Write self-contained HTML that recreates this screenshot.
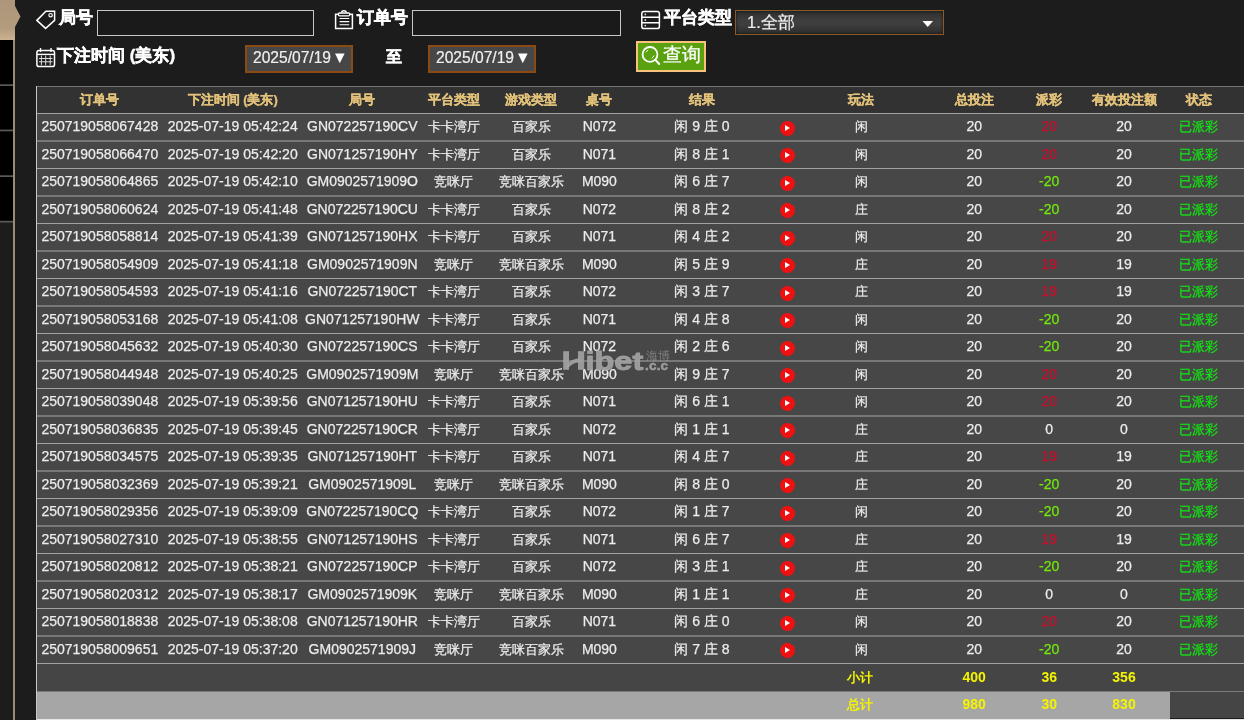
<!DOCTYPE html>
<html><head><meta charset="utf-8"><style>
html,body{margin:0;padding:0;}
body{will-change:transform;width:1244px;height:720px;overflow:hidden;position:relative;background:#1c1c1c;font-family:"Liberation Sans",sans-serif;color:#fff;}
.abs{position:absolute;}
.c{position:absolute;width:200px;text-align:center;white-space:nowrap;font-size:14px;color:#ececec;-webkit-text-stroke:0.25px currentColor;}
.c.h{color:#e2c27a;font-weight:bold;font-size:13px;}
.c.cj{font-size:13px;}
.c.red{color:#c8102e;}
.c.grn{color:#72e80a;}
.c.st{color:#14e414;font-size:13px;}
.c.tot{color:#f4f400;font-weight:bold;font-size:14px;-webkit-text-stroke:0;}
.rowbg{position:absolute;left:36px;width:1208px;background:#474747;}
.sep{position:absolute;left:36px;width:1208px;height:1px;background:#a2a2a2;}
.sep2{position:absolute;left:36px;width:1208px;height:2px;background:#787878;}
.play{position:absolute;width:15.2px;height:15.2px;border-radius:50%;background:#ee1111;}
.play:after{content:"";position:absolute;left:5.4px;top:4.4px;border-left:5.2px solid #fff;border-top:3.2px solid transparent;border-bottom:3.2px solid transparent;}
.lbl{position:absolute;font-weight:bold;font-size:17px;color:#fff;white-space:nowrap;-webkit-text-stroke:0.45px #fff;}
.inp{position:absolute;box-sizing:border-box;border:1.5px solid #c8c8c8;background:#1a1a1a;}
.date{position:absolute;box-sizing:border-box;border:2px solid #8a4a14;background:#474747;color:#eee;font-size:15px;white-space:nowrap;}
</style></head><body>
<!-- left strip -->
<svg class="abs" style="left:0;top:0" width="22" height="720" viewBox="0 0 22 720">
<defs><linearGradient id="tan" x1="0" y1="0" x2="0" y2="1"><stop offset="0" stop-color="#ad967a"/><stop offset="0.7" stop-color="#b39b7d"/><stop offset="1" stop-color="#cbb292"/></linearGradient></defs>
<path d="M0 0 H15 V6 L20.5 16.5 L15 27 V40 H0 Z" fill="url(#tan)"/>
<rect x="0" y="40" width="13" height="182" fill="#000"/>
<rect x="0" y="84.3" width="13" height="1.7" fill="#5d5a55"/>
<rect x="0" y="129.6" width="13" height="1.7" fill="#5d5a55"/>
<rect x="0" y="175.3" width="13" height="1.7" fill="#5d5a55"/>
<rect x="0" y="220.8" width="13" height="1.7" fill="#5d5a55"/>
<rect x="13" y="40" width="2" height="680" fill="#9b8a74"/>
</svg>

<!-- top controls -->
<svg class="abs" style="left:0;top:0" width="1244" height="80">
 <!-- tag -->
 <path d="M36.9 20.4 L45.9 11.3 H54.6 V20.3 L45.6 28.4 Z" fill="none" stroke="#fff" stroke-width="1.5" stroke-linejoin="miter"/>
 <circle cx="50.6" cy="15.2" r="1.7" fill="none" stroke="#fff" stroke-width="1.2"/>
 <!-- clipboard -->
 <rect x="335.6" y="14.3" width="16.8" height="14.2" fill="none" stroke="#fff" stroke-width="1.5"/>
 <rect x="338.4" y="13" width="11.4" height="2.8" rx="1.2" fill="#1c1c1c" stroke="#fff" stroke-width="1.3"/>
 <path d="M341.2 12.6 A2.8 2.6 0 0 1 346.6 12.6" fill="none" stroke="#fff" stroke-width="1.4"/>
 <path d="M339.6 18.5 H349.2 M339.6 21.6 H349.2 M339.6 24.7 H349.2" stroke="#fff" stroke-width="1.1"/>
 <!-- server -->
 <rect x="641.8" y="11.4" width="17.6" height="17.2" rx="2.2" fill="none" stroke="#fff" stroke-width="1.5"/>
 <path d="M641.8 17.3 H659.4 M641.8 22.8 H659.4" stroke="#fff" stroke-width="1.4"/>
 <circle cx="645.3" cy="14.4" r="0.9" fill="#ddd"/><circle cx="645.3" cy="20" r="0.9" fill="#ddd"/><circle cx="645.3" cy="25.6" r="0.9" fill="#ddd"/>
 <!-- calendar -->
 <rect x="36.9" y="50.4" width="17.6" height="16.2" rx="2.2" fill="none" stroke="#fff" stroke-width="1.5"/>
 <path d="M36.9 54.4 H54.5" stroke="#fff" stroke-width="1.4"/>
 <path d="M40.5 48 V52 M51 48 V52" stroke="#fff" stroke-width="1.4"/>
 <path d="M39 58.5 H52.5 M39 61.8 H52.5 M41.4 55.6 V65.2 M45.7 55.6 V65.2 M50.2 55.6 V65.2" stroke="#ddd" stroke-width="1"/>
</svg>
<div class="lbl" style="left:59px;top:6px">局号</div>
<div class="inp" style="left:97px;top:10px;width:217px;height:26px"></div>
<div class="lbl" style="left:357px;top:6px">订单号</div>
<div class="inp" style="left:412px;top:10px;width:209px;height:26px"></div>
<div class="lbl" style="left:664px;top:6px">平台类型</div>
<div class="abs" style="left:735px;top:10px;width:209px;height:25px;box-sizing:border-box;border:1.5px solid #8a5a28;background:linear-gradient(#2c2c2c,#3e3e3e 40%,#3e3e3e 60%,#2c2c2c);box-shadow:inset 0 0 3px #111;"></div>
<div class="abs" style="left:747px;top:11px;font-size:16.5px;color:#eee;line-height:22px;-webkit-text-stroke:0.2px #eee">1.全部</div>
<svg class="abs" style="left:922px;top:20px" width="12" height="8"><path d="M0.5 1 H11 L5.75 7 Z" fill="#fff"/></svg>

<div class="lbl" style="left:57px;top:44px">下注时间 (美东)</div>
<div class="date" style="left:245px;top:45px;width:108px;height:28px"></div>
<div class="abs" style="left:253px;top:47px;font-size:15.6px;color:#f0f0f0;line-height:22px;-webkit-text-stroke:0.2px #f0f0f0">2025/07/19</div><svg class="abs" style="left:334px;top:53px" width="12" height="11"><path d="M1 0.5 H10.6 L5.8 10.2 Z" fill="#fff"/></svg>
<div class="lbl" style="left:386px;top:46.5px;font-size:15.5px">至</div>
<div class="date" style="left:428px;top:45px;width:108px;height:28px"></div>
<div class="abs" style="left:436px;top:47px;font-size:15.6px;color:#f0f0f0;line-height:22px;-webkit-text-stroke:0.2px #f0f0f0">2025/07/19</div><svg class="abs" style="left:517px;top:53px" width="12" height="11"><path d="M1 0.5 H10.6 L5.8 10.2 Z" fill="#fff"/></svg>
<div class="abs" style="left:636px;top:41px;width:70px;height:31px;box-sizing:border-box;border:2px solid #f7c27c;background:#5aa10f;"></div>
<svg class="abs" style="left:640px;top:44px" width="24" height="24"><circle cx="10" cy="10.4" r="7.4" fill="none" stroke="#fff" stroke-width="1.8"/><path d="M15.4 15.9 L19.2 20" stroke="#fff" stroke-width="2" stroke-linecap="round"/><path d="M6.2 8.2 A4.6 4.6 0 0 1 8.2 6" stroke="#fff" stroke-width="0.9" fill="none"/><path d="M14 11.5 A4.6 4.6 0 0 1 11.6 14.3" stroke="#fff" stroke-width="0.9" fill="none"/></svg>
<div class="abs" style="left:663px;top:43px;font-size:19px;color:#fff;line-height:24px;-webkit-text-stroke:0.3px #fff">查询</div>

<!-- table -->
<div class="abs" style="left:36px;top:86px;width:1208px;height:27px;background:#323232"></div>
<div class="abs" style="left:36px;top:86px;width:1208px;height:1px;background:#747474"></div>
<div class="c h" style="left:-0.20px;top:86.00px;height:27.00px;line-height:27.00px">订单号</div>
<div class="c h" style="left:132.70px;top:86.00px;height:27.00px;line-height:27.00px">下注时间 (美东)</div>
<div class="c h" style="left:262.30px;top:86.00px;height:27.00px;line-height:27.00px">局号</div>
<div class="c h" style="left:353.70px;top:86.00px;height:27.00px;line-height:27.00px">平台类型</div>
<div class="c h" style="left:431.30px;top:86.00px;height:27.00px;line-height:27.00px">游戏类型</div>
<div class="c h" style="left:499.40px;top:86.00px;height:27.00px;line-height:27.00px">桌号</div>
<div class="c h" style="left:602.00px;top:86.00px;height:27.00px;line-height:27.00px">结果</div>
<div class="c h" style="left:761.30px;top:86.00px;height:27.00px;line-height:27.00px">玩法</div>
<div class="c h" style="left:874.20px;top:86.00px;height:27.00px;line-height:27.00px">总投注</div>
<div class="c h" style="left:949.20px;top:86.00px;height:27.00px;line-height:27.00px">派彩</div>
<div class="c h" style="left:1024.00px;top:86.00px;height:27.00px;line-height:27.00px">有效投注额</div>
<div class="c h" style="left:1098.80px;top:86.00px;height:27.00px;line-height:27.00px">状态</div>
<div class="rowbg" style="top:113.00px;height:27.50px"></div>
<div class="sep" style="top:113px"></div>
<div class="c " style="left:-0.20px;top:113.00px;height:27.50px;line-height:27.50px">250719058067428</div>
<div class="c " style="left:132.70px;top:113.00px;height:27.50px;line-height:27.50px">2025-07-19 05:42:24</div>
<div class="c " style="left:262.30px;top:113.00px;height:27.50px;line-height:27.50px">GN072257190CV</div>
<div class="c cj" style="left:353.70px;top:113.00px;height:27.50px;line-height:27.50px">卡卡湾厅</div>
<div class="c cj" style="left:431.30px;top:113.00px;height:27.50px;line-height:27.50px">百家乐</div>
<div class="c " style="left:499.40px;top:113.00px;height:27.50px;line-height:27.50px">N072</div>
<div class="c " style="left:602.00px;top:113.00px;height:27.50px;line-height:27.50px">闲 9 庄 0</div>
<div class="c cj" style="left:761.30px;top:113.00px;height:27.50px;line-height:27.50px">闲</div>
<div class="c " style="left:874.20px;top:113.00px;height:27.50px;line-height:27.50px">20</div>
<div class="c " style="left:1024.00px;top:113.00px;height:27.50px;line-height:27.50px">20</div>
<div class="c red" style="left:949.20px;top:113.00px;height:27.50px;line-height:27.50px">20</div>
<div class="c st" style="left:1098.80px;top:113.00px;height:27.50px;line-height:27.50px">已派彩</div>
<div class="play" style="left:779.50px;top:120.60px"></div>
<div class="rowbg" style="top:140.50px;height:27.50px"></div>
<div class="sep2" style="top:140px"></div>
<div class="c " style="left:-0.20px;top:140.50px;height:27.50px;line-height:27.50px">250719058066470</div>
<div class="c " style="left:132.70px;top:140.50px;height:27.50px;line-height:27.50px">2025-07-19 05:42:20</div>
<div class="c " style="left:262.30px;top:140.50px;height:27.50px;line-height:27.50px">GN071257190HY</div>
<div class="c cj" style="left:353.70px;top:140.50px;height:27.50px;line-height:27.50px">卡卡湾厅</div>
<div class="c cj" style="left:431.30px;top:140.50px;height:27.50px;line-height:27.50px">百家乐</div>
<div class="c " style="left:499.40px;top:140.50px;height:27.50px;line-height:27.50px">N071</div>
<div class="c " style="left:602.00px;top:140.50px;height:27.50px;line-height:27.50px">闲 8 庄 1</div>
<div class="c cj" style="left:761.30px;top:140.50px;height:27.50px;line-height:27.50px">闲</div>
<div class="c " style="left:874.20px;top:140.50px;height:27.50px;line-height:27.50px">20</div>
<div class="c " style="left:1024.00px;top:140.50px;height:27.50px;line-height:27.50px">20</div>
<div class="c red" style="left:949.20px;top:140.50px;height:27.50px;line-height:27.50px">20</div>
<div class="c st" style="left:1098.80px;top:140.50px;height:27.50px;line-height:27.50px">已派彩</div>
<div class="play" style="left:779.50px;top:148.10px"></div>
<div class="rowbg" style="top:168.00px;height:27.50px"></div>
<div class="sep" style="top:168px"></div>
<div class="c " style="left:-0.20px;top:168.00px;height:27.50px;line-height:27.50px">250719058064865</div>
<div class="c " style="left:132.70px;top:168.00px;height:27.50px;line-height:27.50px">2025-07-19 05:42:10</div>
<div class="c " style="left:262.30px;top:168.00px;height:27.50px;line-height:27.50px">GM0902571909O</div>
<div class="c cj" style="left:353.70px;top:168.00px;height:27.50px;line-height:27.50px">竞咪厅</div>
<div class="c cj" style="left:431.30px;top:168.00px;height:27.50px;line-height:27.50px">竞咪百家乐</div>
<div class="c " style="left:499.40px;top:168.00px;height:27.50px;line-height:27.50px">M090</div>
<div class="c " style="left:602.00px;top:168.00px;height:27.50px;line-height:27.50px">闲 6 庄 7</div>
<div class="c cj" style="left:761.30px;top:168.00px;height:27.50px;line-height:27.50px">闲</div>
<div class="c " style="left:874.20px;top:168.00px;height:27.50px;line-height:27.50px">20</div>
<div class="c " style="left:1024.00px;top:168.00px;height:27.50px;line-height:27.50px">20</div>
<div class="c grn" style="left:949.20px;top:168.00px;height:27.50px;line-height:27.50px">-20</div>
<div class="c st" style="left:1098.80px;top:168.00px;height:27.50px;line-height:27.50px">已派彩</div>
<div class="play" style="left:779.50px;top:175.60px"></div>
<div class="rowbg" style="top:195.50px;height:27.50px"></div>
<div class="sep2" style="top:195px"></div>
<div class="c " style="left:-0.20px;top:195.50px;height:27.50px;line-height:27.50px">250719058060624</div>
<div class="c " style="left:132.70px;top:195.50px;height:27.50px;line-height:27.50px">2025-07-19 05:41:48</div>
<div class="c " style="left:262.30px;top:195.50px;height:27.50px;line-height:27.50px">GN072257190CU</div>
<div class="c cj" style="left:353.70px;top:195.50px;height:27.50px;line-height:27.50px">卡卡湾厅</div>
<div class="c cj" style="left:431.30px;top:195.50px;height:27.50px;line-height:27.50px">百家乐</div>
<div class="c " style="left:499.40px;top:195.50px;height:27.50px;line-height:27.50px">N072</div>
<div class="c " style="left:602.00px;top:195.50px;height:27.50px;line-height:27.50px">闲 8 庄 2</div>
<div class="c cj" style="left:761.30px;top:195.50px;height:27.50px;line-height:27.50px">庄</div>
<div class="c " style="left:874.20px;top:195.50px;height:27.50px;line-height:27.50px">20</div>
<div class="c " style="left:1024.00px;top:195.50px;height:27.50px;line-height:27.50px">20</div>
<div class="c grn" style="left:949.20px;top:195.50px;height:27.50px;line-height:27.50px">-20</div>
<div class="c st" style="left:1098.80px;top:195.50px;height:27.50px;line-height:27.50px">已派彩</div>
<div class="play" style="left:779.50px;top:203.10px"></div>
<div class="rowbg" style="top:223.00px;height:27.50px"></div>
<div class="sep" style="top:223px"></div>
<div class="c " style="left:-0.20px;top:223.00px;height:27.50px;line-height:27.50px">250719058058814</div>
<div class="c " style="left:132.70px;top:223.00px;height:27.50px;line-height:27.50px">2025-07-19 05:41:39</div>
<div class="c " style="left:262.30px;top:223.00px;height:27.50px;line-height:27.50px">GN071257190HX</div>
<div class="c cj" style="left:353.70px;top:223.00px;height:27.50px;line-height:27.50px">卡卡湾厅</div>
<div class="c cj" style="left:431.30px;top:223.00px;height:27.50px;line-height:27.50px">百家乐</div>
<div class="c " style="left:499.40px;top:223.00px;height:27.50px;line-height:27.50px">N071</div>
<div class="c " style="left:602.00px;top:223.00px;height:27.50px;line-height:27.50px">闲 4 庄 2</div>
<div class="c cj" style="left:761.30px;top:223.00px;height:27.50px;line-height:27.50px">闲</div>
<div class="c " style="left:874.20px;top:223.00px;height:27.50px;line-height:27.50px">20</div>
<div class="c " style="left:1024.00px;top:223.00px;height:27.50px;line-height:27.50px">20</div>
<div class="c red" style="left:949.20px;top:223.00px;height:27.50px;line-height:27.50px">20</div>
<div class="c st" style="left:1098.80px;top:223.00px;height:27.50px;line-height:27.50px">已派彩</div>
<div class="play" style="left:779.50px;top:230.60px"></div>
<div class="rowbg" style="top:250.50px;height:27.50px"></div>
<div class="sep2" style="top:250px"></div>
<div class="c " style="left:-0.20px;top:250.50px;height:27.50px;line-height:27.50px">250719058054909</div>
<div class="c " style="left:132.70px;top:250.50px;height:27.50px;line-height:27.50px">2025-07-19 05:41:18</div>
<div class="c " style="left:262.30px;top:250.50px;height:27.50px;line-height:27.50px">GM0902571909N</div>
<div class="c cj" style="left:353.70px;top:250.50px;height:27.50px;line-height:27.50px">竞咪厅</div>
<div class="c cj" style="left:431.30px;top:250.50px;height:27.50px;line-height:27.50px">竞咪百家乐</div>
<div class="c " style="left:499.40px;top:250.50px;height:27.50px;line-height:27.50px">M090</div>
<div class="c " style="left:602.00px;top:250.50px;height:27.50px;line-height:27.50px">闲 5 庄 9</div>
<div class="c cj" style="left:761.30px;top:250.50px;height:27.50px;line-height:27.50px">庄</div>
<div class="c " style="left:874.20px;top:250.50px;height:27.50px;line-height:27.50px">20</div>
<div class="c " style="left:1024.00px;top:250.50px;height:27.50px;line-height:27.50px">19</div>
<div class="c red" style="left:949.20px;top:250.50px;height:27.50px;line-height:27.50px">19</div>
<div class="c st" style="left:1098.80px;top:250.50px;height:27.50px;line-height:27.50px">已派彩</div>
<div class="play" style="left:779.50px;top:258.10px"></div>
<div class="rowbg" style="top:278.00px;height:27.50px"></div>
<div class="sep" style="top:278px"></div>
<div class="c " style="left:-0.20px;top:278.00px;height:27.50px;line-height:27.50px">250719058054593</div>
<div class="c " style="left:132.70px;top:278.00px;height:27.50px;line-height:27.50px">2025-07-19 05:41:16</div>
<div class="c " style="left:262.30px;top:278.00px;height:27.50px;line-height:27.50px">GN072257190CT</div>
<div class="c cj" style="left:353.70px;top:278.00px;height:27.50px;line-height:27.50px">卡卡湾厅</div>
<div class="c cj" style="left:431.30px;top:278.00px;height:27.50px;line-height:27.50px">百家乐</div>
<div class="c " style="left:499.40px;top:278.00px;height:27.50px;line-height:27.50px">N072</div>
<div class="c " style="left:602.00px;top:278.00px;height:27.50px;line-height:27.50px">闲 3 庄 7</div>
<div class="c cj" style="left:761.30px;top:278.00px;height:27.50px;line-height:27.50px">庄</div>
<div class="c " style="left:874.20px;top:278.00px;height:27.50px;line-height:27.50px">20</div>
<div class="c " style="left:1024.00px;top:278.00px;height:27.50px;line-height:27.50px">19</div>
<div class="c red" style="left:949.20px;top:278.00px;height:27.50px;line-height:27.50px">19</div>
<div class="c st" style="left:1098.80px;top:278.00px;height:27.50px;line-height:27.50px">已派彩</div>
<div class="play" style="left:779.50px;top:285.60px"></div>
<div class="rowbg" style="top:305.50px;height:27.50px"></div>
<div class="sep2" style="top:305px"></div>
<div class="c " style="left:-0.20px;top:305.50px;height:27.50px;line-height:27.50px">250719058053168</div>
<div class="c " style="left:132.70px;top:305.50px;height:27.50px;line-height:27.50px">2025-07-19 05:41:08</div>
<div class="c " style="left:262.30px;top:305.50px;height:27.50px;line-height:27.50px">GN071257190HW</div>
<div class="c cj" style="left:353.70px;top:305.50px;height:27.50px;line-height:27.50px">卡卡湾厅</div>
<div class="c cj" style="left:431.30px;top:305.50px;height:27.50px;line-height:27.50px">百家乐</div>
<div class="c " style="left:499.40px;top:305.50px;height:27.50px;line-height:27.50px">N071</div>
<div class="c " style="left:602.00px;top:305.50px;height:27.50px;line-height:27.50px">闲 4 庄 8</div>
<div class="c cj" style="left:761.30px;top:305.50px;height:27.50px;line-height:27.50px">闲</div>
<div class="c " style="left:874.20px;top:305.50px;height:27.50px;line-height:27.50px">20</div>
<div class="c " style="left:1024.00px;top:305.50px;height:27.50px;line-height:27.50px">20</div>
<div class="c grn" style="left:949.20px;top:305.50px;height:27.50px;line-height:27.50px">-20</div>
<div class="c st" style="left:1098.80px;top:305.50px;height:27.50px;line-height:27.50px">已派彩</div>
<div class="play" style="left:779.50px;top:313.10px"></div>
<div class="rowbg" style="top:333.00px;height:27.50px"></div>
<div class="sep" style="top:333px"></div>
<div class="c " style="left:-0.20px;top:333.00px;height:27.50px;line-height:27.50px">250719058045632</div>
<div class="c " style="left:132.70px;top:333.00px;height:27.50px;line-height:27.50px">2025-07-19 05:40:30</div>
<div class="c " style="left:262.30px;top:333.00px;height:27.50px;line-height:27.50px">GN072257190CS</div>
<div class="c cj" style="left:353.70px;top:333.00px;height:27.50px;line-height:27.50px">卡卡湾厅</div>
<div class="c cj" style="left:431.30px;top:333.00px;height:27.50px;line-height:27.50px">百家乐</div>
<div class="c " style="left:499.40px;top:333.00px;height:27.50px;line-height:27.50px">N072</div>
<div class="c " style="left:602.00px;top:333.00px;height:27.50px;line-height:27.50px">闲 2 庄 6</div>
<div class="c cj" style="left:761.30px;top:333.00px;height:27.50px;line-height:27.50px">闲</div>
<div class="c " style="left:874.20px;top:333.00px;height:27.50px;line-height:27.50px">20</div>
<div class="c " style="left:1024.00px;top:333.00px;height:27.50px;line-height:27.50px">20</div>
<div class="c grn" style="left:949.20px;top:333.00px;height:27.50px;line-height:27.50px">-20</div>
<div class="c st" style="left:1098.80px;top:333.00px;height:27.50px;line-height:27.50px">已派彩</div>
<div class="play" style="left:779.50px;top:340.60px"></div>
<div class="rowbg" style="top:360.50px;height:27.50px"></div>
<div class="sep2" style="top:360px"></div>
<div class="c " style="left:-0.20px;top:360.50px;height:27.50px;line-height:27.50px">250719058044948</div>
<div class="c " style="left:132.70px;top:360.50px;height:27.50px;line-height:27.50px">2025-07-19 05:40:25</div>
<div class="c " style="left:262.30px;top:360.50px;height:27.50px;line-height:27.50px">GM0902571909M</div>
<div class="c cj" style="left:353.70px;top:360.50px;height:27.50px;line-height:27.50px">竞咪厅</div>
<div class="c cj" style="left:431.30px;top:360.50px;height:27.50px;line-height:27.50px">竞咪百家乐</div>
<div class="c " style="left:499.40px;top:360.50px;height:27.50px;line-height:27.50px">M090</div>
<div class="c " style="left:602.00px;top:360.50px;height:27.50px;line-height:27.50px">闲 9 庄 7</div>
<div class="c cj" style="left:761.30px;top:360.50px;height:27.50px;line-height:27.50px">闲</div>
<div class="c " style="left:874.20px;top:360.50px;height:27.50px;line-height:27.50px">20</div>
<div class="c " style="left:1024.00px;top:360.50px;height:27.50px;line-height:27.50px">20</div>
<div class="c red" style="left:949.20px;top:360.50px;height:27.50px;line-height:27.50px">20</div>
<div class="c st" style="left:1098.80px;top:360.50px;height:27.50px;line-height:27.50px">已派彩</div>
<div class="play" style="left:779.50px;top:368.10px"></div>
<div class="rowbg" style="top:388.00px;height:27.50px"></div>
<div class="sep" style="top:388px"></div>
<div class="c " style="left:-0.20px;top:388.00px;height:27.50px;line-height:27.50px">250719058039048</div>
<div class="c " style="left:132.70px;top:388.00px;height:27.50px;line-height:27.50px">2025-07-19 05:39:56</div>
<div class="c " style="left:262.30px;top:388.00px;height:27.50px;line-height:27.50px">GN071257190HU</div>
<div class="c cj" style="left:353.70px;top:388.00px;height:27.50px;line-height:27.50px">卡卡湾厅</div>
<div class="c cj" style="left:431.30px;top:388.00px;height:27.50px;line-height:27.50px">百家乐</div>
<div class="c " style="left:499.40px;top:388.00px;height:27.50px;line-height:27.50px">N071</div>
<div class="c " style="left:602.00px;top:388.00px;height:27.50px;line-height:27.50px">闲 6 庄 1</div>
<div class="c cj" style="left:761.30px;top:388.00px;height:27.50px;line-height:27.50px">闲</div>
<div class="c " style="left:874.20px;top:388.00px;height:27.50px;line-height:27.50px">20</div>
<div class="c " style="left:1024.00px;top:388.00px;height:27.50px;line-height:27.50px">20</div>
<div class="c red" style="left:949.20px;top:388.00px;height:27.50px;line-height:27.50px">20</div>
<div class="c st" style="left:1098.80px;top:388.00px;height:27.50px;line-height:27.50px">已派彩</div>
<div class="play" style="left:779.50px;top:395.60px"></div>
<div class="rowbg" style="top:415.50px;height:27.50px"></div>
<div class="sep2" style="top:415px"></div>
<div class="c " style="left:-0.20px;top:415.50px;height:27.50px;line-height:27.50px">250719058036835</div>
<div class="c " style="left:132.70px;top:415.50px;height:27.50px;line-height:27.50px">2025-07-19 05:39:45</div>
<div class="c " style="left:262.30px;top:415.50px;height:27.50px;line-height:27.50px">GN072257190CR</div>
<div class="c cj" style="left:353.70px;top:415.50px;height:27.50px;line-height:27.50px">卡卡湾厅</div>
<div class="c cj" style="left:431.30px;top:415.50px;height:27.50px;line-height:27.50px">百家乐</div>
<div class="c " style="left:499.40px;top:415.50px;height:27.50px;line-height:27.50px">N072</div>
<div class="c " style="left:602.00px;top:415.50px;height:27.50px;line-height:27.50px">闲 1 庄 1</div>
<div class="c cj" style="left:761.30px;top:415.50px;height:27.50px;line-height:27.50px">庄</div>
<div class="c " style="left:874.20px;top:415.50px;height:27.50px;line-height:27.50px">20</div>
<div class="c " style="left:1024.00px;top:415.50px;height:27.50px;line-height:27.50px">0</div>
<div class="c " style="left:949.20px;top:415.50px;height:27.50px;line-height:27.50px">0</div>
<div class="c st" style="left:1098.80px;top:415.50px;height:27.50px;line-height:27.50px">已派彩</div>
<div class="play" style="left:779.50px;top:423.10px"></div>
<div class="rowbg" style="top:443.00px;height:27.50px"></div>
<div class="sep" style="top:443px"></div>
<div class="c " style="left:-0.20px;top:443.00px;height:27.50px;line-height:27.50px">250719058034575</div>
<div class="c " style="left:132.70px;top:443.00px;height:27.50px;line-height:27.50px">2025-07-19 05:39:35</div>
<div class="c " style="left:262.30px;top:443.00px;height:27.50px;line-height:27.50px">GN071257190HT</div>
<div class="c cj" style="left:353.70px;top:443.00px;height:27.50px;line-height:27.50px">卡卡湾厅</div>
<div class="c cj" style="left:431.30px;top:443.00px;height:27.50px;line-height:27.50px">百家乐</div>
<div class="c " style="left:499.40px;top:443.00px;height:27.50px;line-height:27.50px">N071</div>
<div class="c " style="left:602.00px;top:443.00px;height:27.50px;line-height:27.50px">闲 4 庄 7</div>
<div class="c cj" style="left:761.30px;top:443.00px;height:27.50px;line-height:27.50px">庄</div>
<div class="c " style="left:874.20px;top:443.00px;height:27.50px;line-height:27.50px">20</div>
<div class="c " style="left:1024.00px;top:443.00px;height:27.50px;line-height:27.50px">19</div>
<div class="c red" style="left:949.20px;top:443.00px;height:27.50px;line-height:27.50px">19</div>
<div class="c st" style="left:1098.80px;top:443.00px;height:27.50px;line-height:27.50px">已派彩</div>
<div class="play" style="left:779.50px;top:450.60px"></div>
<div class="rowbg" style="top:470.50px;height:27.50px"></div>
<div class="sep2" style="top:470px"></div>
<div class="c " style="left:-0.20px;top:470.50px;height:27.50px;line-height:27.50px">250719058032369</div>
<div class="c " style="left:132.70px;top:470.50px;height:27.50px;line-height:27.50px">2025-07-19 05:39:21</div>
<div class="c " style="left:262.30px;top:470.50px;height:27.50px;line-height:27.50px">GM0902571909L</div>
<div class="c cj" style="left:353.70px;top:470.50px;height:27.50px;line-height:27.50px">竞咪厅</div>
<div class="c cj" style="left:431.30px;top:470.50px;height:27.50px;line-height:27.50px">竞咪百家乐</div>
<div class="c " style="left:499.40px;top:470.50px;height:27.50px;line-height:27.50px">M090</div>
<div class="c " style="left:602.00px;top:470.50px;height:27.50px;line-height:27.50px">闲 8 庄 0</div>
<div class="c cj" style="left:761.30px;top:470.50px;height:27.50px;line-height:27.50px">庄</div>
<div class="c " style="left:874.20px;top:470.50px;height:27.50px;line-height:27.50px">20</div>
<div class="c " style="left:1024.00px;top:470.50px;height:27.50px;line-height:27.50px">20</div>
<div class="c grn" style="left:949.20px;top:470.50px;height:27.50px;line-height:27.50px">-20</div>
<div class="c st" style="left:1098.80px;top:470.50px;height:27.50px;line-height:27.50px">已派彩</div>
<div class="play" style="left:779.50px;top:478.10px"></div>
<div class="rowbg" style="top:498.00px;height:27.50px"></div>
<div class="sep" style="top:498px"></div>
<div class="c " style="left:-0.20px;top:498.00px;height:27.50px;line-height:27.50px">250719058029356</div>
<div class="c " style="left:132.70px;top:498.00px;height:27.50px;line-height:27.50px">2025-07-19 05:39:09</div>
<div class="c " style="left:262.30px;top:498.00px;height:27.50px;line-height:27.50px">GN072257190CQ</div>
<div class="c cj" style="left:353.70px;top:498.00px;height:27.50px;line-height:27.50px">卡卡湾厅</div>
<div class="c cj" style="left:431.30px;top:498.00px;height:27.50px;line-height:27.50px">百家乐</div>
<div class="c " style="left:499.40px;top:498.00px;height:27.50px;line-height:27.50px">N072</div>
<div class="c " style="left:602.00px;top:498.00px;height:27.50px;line-height:27.50px">闲 1 庄 7</div>
<div class="c cj" style="left:761.30px;top:498.00px;height:27.50px;line-height:27.50px">闲</div>
<div class="c " style="left:874.20px;top:498.00px;height:27.50px;line-height:27.50px">20</div>
<div class="c " style="left:1024.00px;top:498.00px;height:27.50px;line-height:27.50px">20</div>
<div class="c grn" style="left:949.20px;top:498.00px;height:27.50px;line-height:27.50px">-20</div>
<div class="c st" style="left:1098.80px;top:498.00px;height:27.50px;line-height:27.50px">已派彩</div>
<div class="play" style="left:779.50px;top:505.60px"></div>
<div class="rowbg" style="top:525.50px;height:27.50px"></div>
<div class="sep2" style="top:525px"></div>
<div class="c " style="left:-0.20px;top:525.50px;height:27.50px;line-height:27.50px">250719058027310</div>
<div class="c " style="left:132.70px;top:525.50px;height:27.50px;line-height:27.50px">2025-07-19 05:38:55</div>
<div class="c " style="left:262.30px;top:525.50px;height:27.50px;line-height:27.50px">GN071257190HS</div>
<div class="c cj" style="left:353.70px;top:525.50px;height:27.50px;line-height:27.50px">卡卡湾厅</div>
<div class="c cj" style="left:431.30px;top:525.50px;height:27.50px;line-height:27.50px">百家乐</div>
<div class="c " style="left:499.40px;top:525.50px;height:27.50px;line-height:27.50px">N071</div>
<div class="c " style="left:602.00px;top:525.50px;height:27.50px;line-height:27.50px">闲 6 庄 7</div>
<div class="c cj" style="left:761.30px;top:525.50px;height:27.50px;line-height:27.50px">庄</div>
<div class="c " style="left:874.20px;top:525.50px;height:27.50px;line-height:27.50px">20</div>
<div class="c " style="left:1024.00px;top:525.50px;height:27.50px;line-height:27.50px">19</div>
<div class="c red" style="left:949.20px;top:525.50px;height:27.50px;line-height:27.50px">19</div>
<div class="c st" style="left:1098.80px;top:525.50px;height:27.50px;line-height:27.50px">已派彩</div>
<div class="play" style="left:779.50px;top:533.10px"></div>
<div class="rowbg" style="top:553.00px;height:27.50px"></div>
<div class="sep" style="top:553px"></div>
<div class="c " style="left:-0.20px;top:553.00px;height:27.50px;line-height:27.50px">250719058020812</div>
<div class="c " style="left:132.70px;top:553.00px;height:27.50px;line-height:27.50px">2025-07-19 05:38:21</div>
<div class="c " style="left:262.30px;top:553.00px;height:27.50px;line-height:27.50px">GN072257190CP</div>
<div class="c cj" style="left:353.70px;top:553.00px;height:27.50px;line-height:27.50px">卡卡湾厅</div>
<div class="c cj" style="left:431.30px;top:553.00px;height:27.50px;line-height:27.50px">百家乐</div>
<div class="c " style="left:499.40px;top:553.00px;height:27.50px;line-height:27.50px">N072</div>
<div class="c " style="left:602.00px;top:553.00px;height:27.50px;line-height:27.50px">闲 3 庄 1</div>
<div class="c cj" style="left:761.30px;top:553.00px;height:27.50px;line-height:27.50px">庄</div>
<div class="c " style="left:874.20px;top:553.00px;height:27.50px;line-height:27.50px">20</div>
<div class="c " style="left:1024.00px;top:553.00px;height:27.50px;line-height:27.50px">20</div>
<div class="c grn" style="left:949.20px;top:553.00px;height:27.50px;line-height:27.50px">-20</div>
<div class="c st" style="left:1098.80px;top:553.00px;height:27.50px;line-height:27.50px">已派彩</div>
<div class="play" style="left:779.50px;top:560.60px"></div>
<div class="rowbg" style="top:580.50px;height:27.50px"></div>
<div class="sep2" style="top:580px"></div>
<div class="c " style="left:-0.20px;top:580.50px;height:27.50px;line-height:27.50px">250719058020312</div>
<div class="c " style="left:132.70px;top:580.50px;height:27.50px;line-height:27.50px">2025-07-19 05:38:17</div>
<div class="c " style="left:262.30px;top:580.50px;height:27.50px;line-height:27.50px">GM0902571909K</div>
<div class="c cj" style="left:353.70px;top:580.50px;height:27.50px;line-height:27.50px">竞咪厅</div>
<div class="c cj" style="left:431.30px;top:580.50px;height:27.50px;line-height:27.50px">竞咪百家乐</div>
<div class="c " style="left:499.40px;top:580.50px;height:27.50px;line-height:27.50px">M090</div>
<div class="c " style="left:602.00px;top:580.50px;height:27.50px;line-height:27.50px">闲 1 庄 1</div>
<div class="c cj" style="left:761.30px;top:580.50px;height:27.50px;line-height:27.50px">庄</div>
<div class="c " style="left:874.20px;top:580.50px;height:27.50px;line-height:27.50px">20</div>
<div class="c " style="left:1024.00px;top:580.50px;height:27.50px;line-height:27.50px">0</div>
<div class="c " style="left:949.20px;top:580.50px;height:27.50px;line-height:27.50px">0</div>
<div class="c st" style="left:1098.80px;top:580.50px;height:27.50px;line-height:27.50px">已派彩</div>
<div class="play" style="left:779.50px;top:588.10px"></div>
<div class="rowbg" style="top:608.00px;height:27.50px"></div>
<div class="sep" style="top:608px"></div>
<div class="c " style="left:-0.20px;top:608.00px;height:27.50px;line-height:27.50px">250719058018838</div>
<div class="c " style="left:132.70px;top:608.00px;height:27.50px;line-height:27.50px">2025-07-19 05:38:08</div>
<div class="c " style="left:262.30px;top:608.00px;height:27.50px;line-height:27.50px">GN071257190HR</div>
<div class="c cj" style="left:353.70px;top:608.00px;height:27.50px;line-height:27.50px">卡卡湾厅</div>
<div class="c cj" style="left:431.30px;top:608.00px;height:27.50px;line-height:27.50px">百家乐</div>
<div class="c " style="left:499.40px;top:608.00px;height:27.50px;line-height:27.50px">N071</div>
<div class="c " style="left:602.00px;top:608.00px;height:27.50px;line-height:27.50px">闲 6 庄 0</div>
<div class="c cj" style="left:761.30px;top:608.00px;height:27.50px;line-height:27.50px">闲</div>
<div class="c " style="left:874.20px;top:608.00px;height:27.50px;line-height:27.50px">20</div>
<div class="c " style="left:1024.00px;top:608.00px;height:27.50px;line-height:27.50px">20</div>
<div class="c red" style="left:949.20px;top:608.00px;height:27.50px;line-height:27.50px">20</div>
<div class="c st" style="left:1098.80px;top:608.00px;height:27.50px;line-height:27.50px">已派彩</div>
<div class="play" style="left:779.50px;top:615.60px"></div>
<div class="rowbg" style="top:635.50px;height:27.50px"></div>
<div class="sep2" style="top:635px"></div>
<div class="c " style="left:-0.20px;top:635.50px;height:27.50px;line-height:27.50px">250719058009651</div>
<div class="c " style="left:132.70px;top:635.50px;height:27.50px;line-height:27.50px">2025-07-19 05:37:20</div>
<div class="c " style="left:262.30px;top:635.50px;height:27.50px;line-height:27.50px">GM0902571909J</div>
<div class="c cj" style="left:353.70px;top:635.50px;height:27.50px;line-height:27.50px">竞咪厅</div>
<div class="c cj" style="left:431.30px;top:635.50px;height:27.50px;line-height:27.50px">竞咪百家乐</div>
<div class="c " style="left:499.40px;top:635.50px;height:27.50px;line-height:27.50px">M090</div>
<div class="c " style="left:602.00px;top:635.50px;height:27.50px;line-height:27.50px">闲 7 庄 8</div>
<div class="c cj" style="left:761.30px;top:635.50px;height:27.50px;line-height:27.50px">闲</div>
<div class="c " style="left:874.20px;top:635.50px;height:27.50px;line-height:27.50px">20</div>
<div class="c " style="left:1024.00px;top:635.50px;height:27.50px;line-height:27.50px">20</div>
<div class="c grn" style="left:949.20px;top:635.50px;height:27.50px;line-height:27.50px">-20</div>
<div class="c st" style="left:1098.80px;top:635.50px;height:27.50px;line-height:27.50px">已派彩</div>
<div class="play" style="left:779.50px;top:643.10px"></div>
<div class="sep" style="top:663.00px"></div>
<div class="abs" style="left:36px;top:664px;width:1208px;height:27px;background:#454545"></div>
<div class="abs" style="left:36px;top:691px;width:1134px;height:27.5px;background:#a6a6a6"></div>
<div class="abs" style="left:1170px;top:691px;width:74px;height:27px;background:#454545"></div>
<div class="abs" style="left:36px;top:691px;width:1208px;height:1px;background:#7a7a7a"></div>
<div class="abs" style="left:36px;top:718.5px;width:1208px;height:2px;background:#e6e6e6"></div>
<div class="c tot" style="left:759.8px;top:664px;height:27px;line-height:27px;font-size:13px">小计</div>
<div class="c tot" style="left:874.2px;top:664px;height:27px;line-height:27px">400</div>
<div class="c tot" style="left:949.2px;top:664px;height:27px;line-height:27px">36</div>
<div class="c tot" style="left:1024.0px;top:664px;height:27px;line-height:27px">356</div>
<div class="c tot" style="left:759.8px;top:691px;height:27px;line-height:27px;font-size:13px">总计</div>
<div class="c tot" style="left:874.2px;top:691px;height:27px;line-height:27px">980</div>
<div class="c tot" style="left:949.2px;top:691px;height:27px;line-height:27px">30</div>
<div class="c tot" style="left:1024.0px;top:691px;height:27px;line-height:27px">830</div>
<div class="abs" style="left:35.5px;top:86px;width:1.5px;height:634px;background:#c8c8c8"></div>

<!-- watermark -->
<svg class="abs" style="left:555px;top:340px" width="125" height="40" viewBox="555 340 125 40">
 <g fill="#a2a2a2" fill-opacity="0.92">
  <rect x="563.2" y="351.2" width="5.8" height="18.6"/>
  <rect x="578" y="351.2" width="6.2" height="18.6"/>
  <path d="M566 366 C570 360 575 358.5 580 358.2 L580 362.2 C575 362.5 571 364 567 369.5 Z"/>
 </g>
 <text x="585.5" y="370" font-family="Liberation Sans" font-weight="bold" font-size="26" fill="#a2a2a2" fill-opacity="0.92" stroke="#a2a2a2" stroke-opacity="0.92" stroke-width="0.9" transform="translate(585.5 0) scale(1.25 1) translate(-585.5 0)">ibet</text>
 <text x="645" y="370" font-family="Liberation Sans" font-weight="bold" font-size="13.5" fill="#a2a2a2" fill-opacity="0.9" stroke="#a2a2a2" stroke-width="0.5" letter-spacing="0.2">.c.c</text>
 <text x="646" y="360" font-family="Liberation Serif" font-size="11.5" fill="#a2a2a2" fill-opacity="0.6">海博</text>
</svg>
</body></html>
